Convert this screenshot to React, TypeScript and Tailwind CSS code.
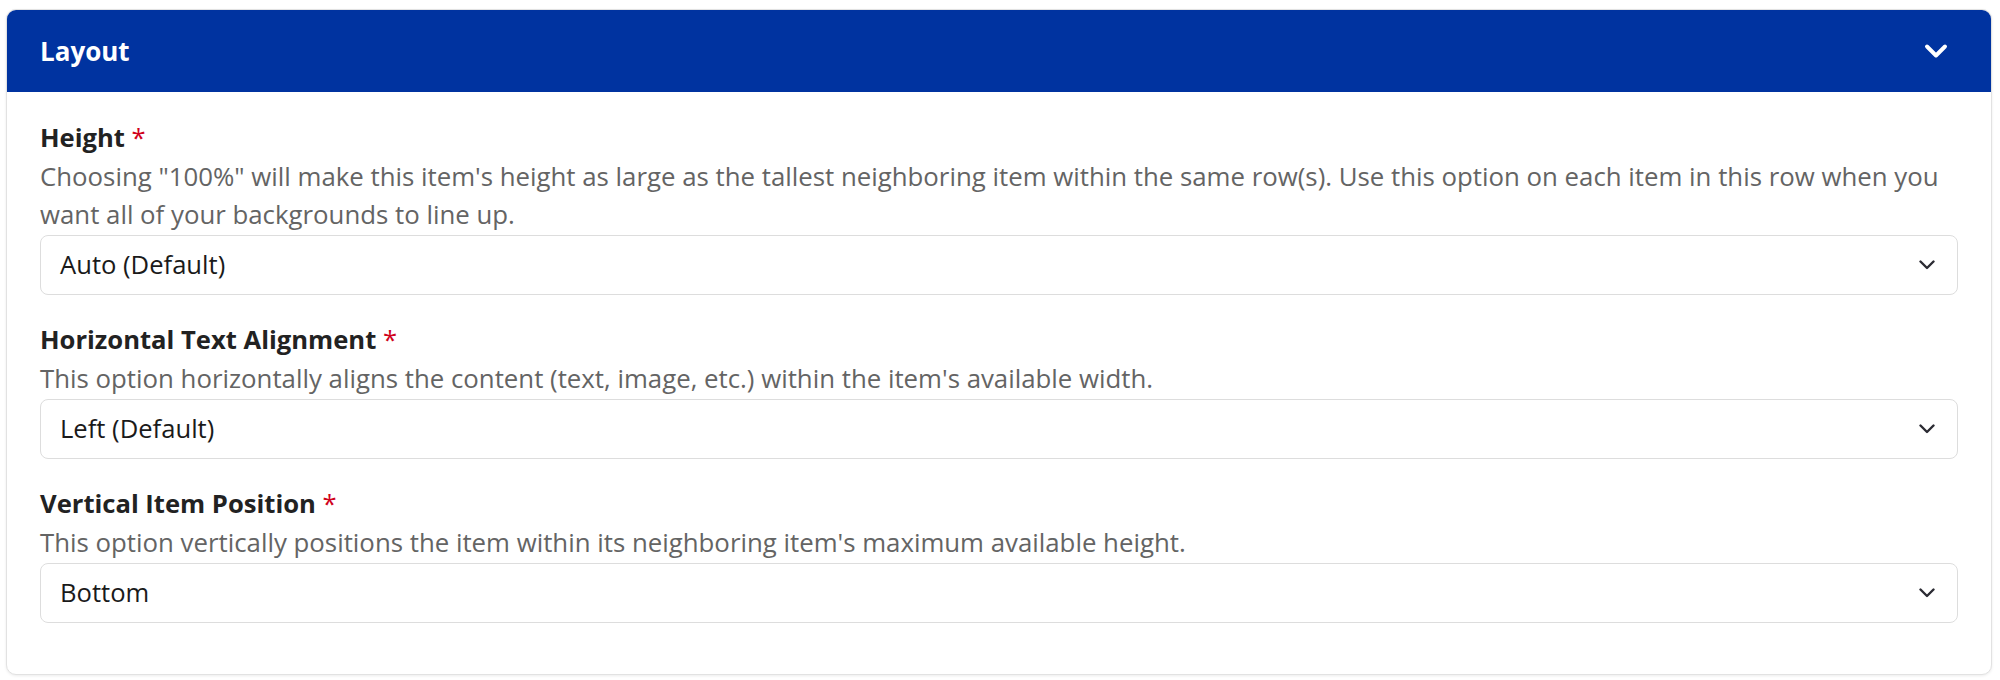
import { ChevronDown } from 'lucide-react';

interface SelectFieldProps {
  label: string;
  description: string;
  value: string;
}

const SelectField = ({ label, description, value }: SelectFieldProps) => (
  <div>
    <div className="text-[25.6px] font-bold leading-[38px] text-[#222222]">
      {label} <span className="font-normal text-[#d0021b]">*</span>
    </div>
    <p className="mb-[2px] text-[25.8px] leading-[38px] text-[#646464]">{description}</p>
    <div className="flex h-[60px] items-center justify-between rounded-[8px] border border-[#dddddd] bg-white pl-[19px] pr-[22px]">
      <span className="text-[25.6px] text-[#1a1a1a]">{value}</span>
      <svg width="16" height="10" viewBox="0 0 16 10" fill="none" className="text-[#2b2b33]">
        <path d="M1.5 1.5 L8 8 L14.5 1.5" stroke="currentColor" strokeWidth="2.4" strokeLinecap="round" strokeLinejoin="round" />
      </svg>
    </div>
  </div>
);

const fields: SelectFieldProps[] = [
  {
    label: 'Height',
    description:
      'Choosing "100%" will make this item\'s height as large as the tallest neighboring item within the same row(s). Use this option on each item in this row when you want all of your backgrounds to line up.',
    value: 'Auto (Default)',
  },
  {
    label: 'Horizontal Text Alignment',
    description: "This option horizontally aligns the content (text, image, etc.) within the item's available width.",
    value: 'Left (Default)',
  },
  {
    label: 'Vertical Item Position',
    description: "This option vertically positions the item within its neighboring item's maximum available height.",
    value: 'Bottom',
  },
];

export default function App() {
  return (
    <div className="min-h-[680px] bg-white pl-[6px] pr-[8px] pt-[9px] font-['Open_Sans',sans-serif]">
      <div className="overflow-hidden rounded-[10px] border border-[#e2e2e2] bg-white shadow-[0_1px_3px_rgba(0,0,0,0.08)]">
        <div className="flex h-[82px] items-center justify-between bg-[#0033a0] pl-[33px] pr-[37px]">
          <h2 className="text-[26px] font-bold text-white">Layout</h2>
          <ChevronDown className="h-[36px] w-[36px] text-white" strokeWidth={2.6} />
        </div>
        <div className="flex flex-col gap-[26px] px-[33px] pb-[51px] pt-[27px]">
          {fields.map((field) => (
            <SelectField key={field.label} {...field} />
          ))}
        </div>
      </div>
    </div>
  );
}
